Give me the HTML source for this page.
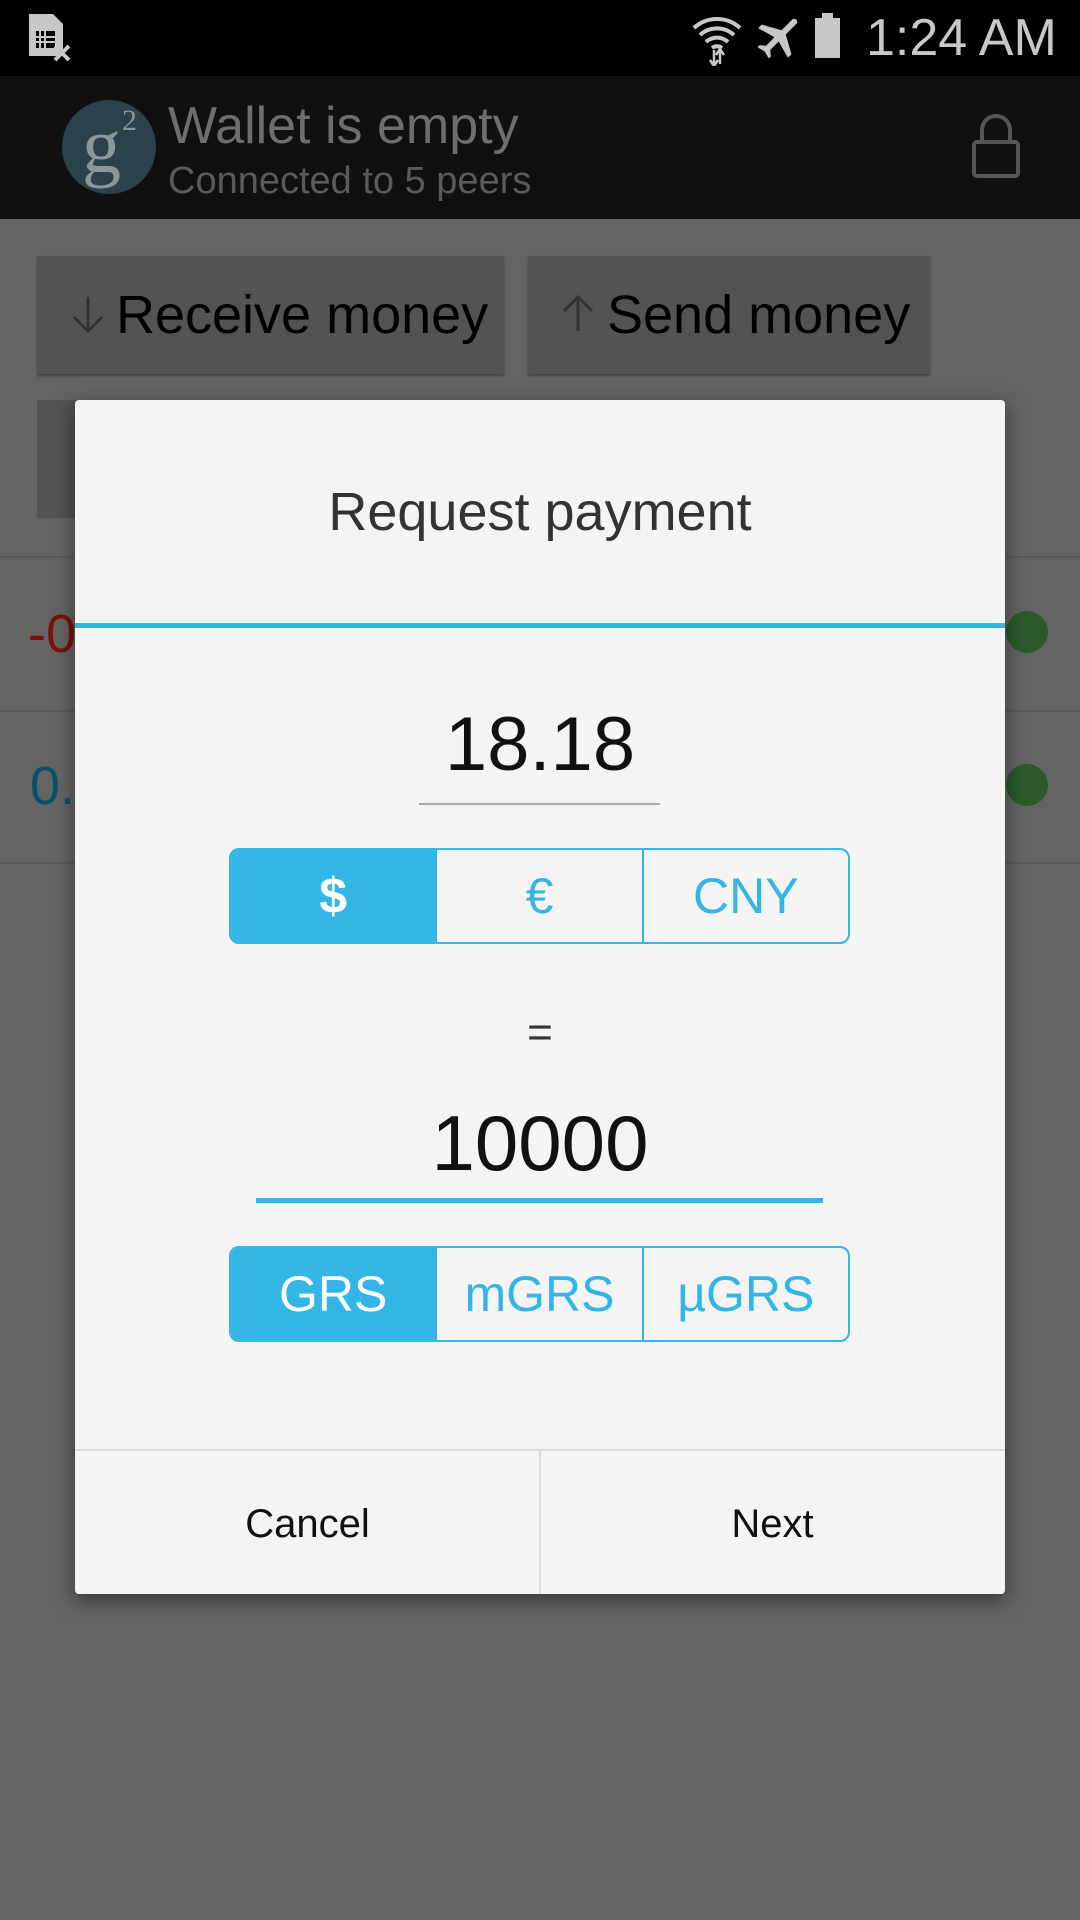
<!DOCTYPE html>
<html><head><meta charset="utf-8"><style>
*{margin:0;padding:0;box-sizing:border-box}
body{width:1080px;height:1920px;background:#646464;font-family:"Liberation Sans",sans-serif;position:relative;overflow:hidden}
.a{position:absolute}
.seg{position:absolute;left:229px;width:621px;height:96px;border:2px solid #33b5e5;border-radius:10px;display:flex;overflow:hidden;background:#f4f4f4}
.seg div{flex:1;display:flex;align-items:center;justify-content:center;color:#33b5e5;font-size:50px;border-left:2px solid #33b5e5}
.seg div:first-child{border-left:none;background:#33b5e5;color:#fff}
</style></head><body>
<div class="a" style="left:0;top:0;width:1080px;height:76px;background:#000"></div>
<svg class="a" style="left:28px;top:12px" width="50" height="52" viewBox="0 0 50 52"><path d="M1 2h24l10 10v32H1z" fill="#c8c8c8"/><rect x="8" y="19" width="19" height="17" fill="#000"/><path d="M12 19v17M17 19v17M8 25h19M8 30h19" stroke="#c8c8c8" stroke-width="2"/><path d="M27 34l14 14M41 34L27 48" stroke="#c8c8c8" stroke-width="4"/></svg>
<svg class="a" style="left:690px;top:10px" width="160" height="56" viewBox="0 0 160 56"><path d="M4 18a34 34 0 0 1 46 0M10 25a25 25 0 0 1 34 0M16 32a16 16 0 0 1 22 0M22 38a8 8 0 0 1 10 0" stroke="#c8c8c8" stroke-width="4" fill="none"/><path d="M24 40v16M20 50l4 6 4-6M30 54V40M26 45l4-6 4 6" stroke="#c8c8c8" stroke-width="2.5" fill="none"/><g transform="rotate(45 88 28)"><path d="M85 4q3-4 6 0v16l18 10v5l-18-5v12l5 4v3l-8-2-8 2v-3l5-4v-12l-18 5v-5l18-10z" fill="#c8c8c8"/></g><rect x="125" y="8" width="25" height="40" fill="#c8c8c8"/><rect x="132" y="3" width="11" height="6" fill="#c8c8c8"/></svg>
<div class="a" style="left:866px;top:8px;font-size:52px;color:#c8c8c8;line-height:60px">1:24 AM</div>
<div class="a" style="left:0;top:76px;width:1080px;height:143px;background:#101010"></div>
<svg class="a" style="left:60px;top:98px" width="98" height="98" viewBox="0 0 98 98"><circle cx="49" cy="49" r="47" fill="#2b414b"/><text x="22" y="74" font-family="Liberation Serif,serif" font-size="78" fill="#8a979b">g</text><text x="62" y="32" font-family="Liberation Serif,serif" font-size="30" fill="#8a979b">2</text></svg>
<div class="a" style="left:168px;top:96px;font-size:52px;color:#6e6e6e;line-height:60px">Wallet is empty</div>
<div class="a" style="left:168px;top:158px;font-size:38px;color:#5a5a5a;line-height:46px">Connected to 5 peers</div>
<svg class="a" style="left:970px;top:114px" width="52" height="66" viewBox="0 0 52 66"><path d="M12 28V16a14 14 0 0 1 28 0v12" stroke="#555" stroke-width="4" fill="none"/><rect x="4" y="28" width="44" height="34" rx="3" stroke="#555" stroke-width="4" fill="none"/></svg>
<div class="a" style="left:37px;top:256px;width:467px;height:118px;background:#535353;box-shadow:0 2px 2px #444"></div>
<svg class="a" style="left:68px;top:295px" width="40" height="40" viewBox="0 0 40 40"><path d="M20 2v34M6 22l14 14 14-14" stroke="#333" stroke-width="3" fill="none"/></svg>
<div class="a" style="left:116px;top:283px;font-size:54px;color:#000;line-height:64px">Receive money</div>
<div class="a" style="left:528px;top:256px;width:402px;height:118px;background:#535353;box-shadow:0 2px 2px #444"></div>
<svg class="a" style="left:558px;top:293px" width="40" height="40" viewBox="0 0 40 40"><path d="M20 38V4M6 18L20 4l14 14" stroke="#333" stroke-width="3" fill="none"/></svg>
<div class="a" style="left:607px;top:283px;font-size:54px;color:#000;line-height:64px">Send money</div>
<div class="a" style="left:37px;top:400px;width:60px;height:118px;background:#535353"></div>
<div class="a" style="left:0;top:556px;width:1080px;height:2px;background:#5a5a5a"></div>
<div class="a" style="left:0;top:710px;width:1080px;height:2px;background:#5a5a5a"></div>
<div class="a" style="left:0;top:862px;width:1080px;height:2px;background:#5a5a5a"></div>
<div class="a" style="left:28px;top:604px;font-size:54px;color:#7a1208;line-height:60px">-0</div>
<div class="a" style="left:30px;top:756px;font-size:54px;color:#0c4f6c;line-height:60px">0.</div>
<div class="a" style="left:1006px;top:611px;width:42px;height:42px;border-radius:50%;background:#2a5a2a"></div>
<div class="a" style="left:1006px;top:764px;width:42px;height:42px;border-radius:50%;background:#2a5a2a"></div>
<div class="a" style="left:75px;top:400px;width:930px;height:1194px;background:#f4f4f4;border-radius:4px;box-shadow:0 6px 20px rgba(0,0,0,.5)"></div>
<div class="a" style="left:75px;top:480px;width:930px;text-align:center;font-size:54px;color:#333;line-height:64px">Request payment</div>
<div class="a" style="left:75px;top:623px;width:930px;height:5px;background:#33b5e5"></div>
<div class="a" style="left:75px;top:700px;width:930px;text-align:center;font-size:76px;color:#111;line-height:90px">18.18</div>
<div class="a" style="left:419px;top:803px;width:241px;height:2px;background:#aaa"></div>
<div class="seg" style="top:848px"><div style="font-weight:bold">$</div><div>€</div><div>CNY</div></div>
<div class="a" style="left:75px;top:1005px;width:930px;text-align:center;font-size:44px;color:#333;line-height:56px">=</div>
<div class="a" style="left:75px;top:1098px;width:930px;text-align:center;font-size:78px;color:#111;line-height:90px">10000</div>
<div class="a" style="left:256px;top:1198px;width:567px;height:5px;background:#33b5e5"></div>
<div class="seg" style="top:1246px"><div>GRS</div><div>mGRS</div><div>µGRS</div></div>
<div class="a" style="left:75px;top:1449px;width:930px;height:2px;background:#dcdcdc"></div>
<div class="a" style="left:539px;top:1450px;width:2px;height:144px;background:#dcdcdc"></div>
<div class="a" style="left:75px;top:1500px;width:465px;text-align:center;font-size:40px;color:#111;line-height:48px">Cancel</div>
<div class="a" style="left:540px;top:1500px;width:465px;text-align:center;font-size:40px;color:#111;line-height:48px">Next</div>
</body></html>
